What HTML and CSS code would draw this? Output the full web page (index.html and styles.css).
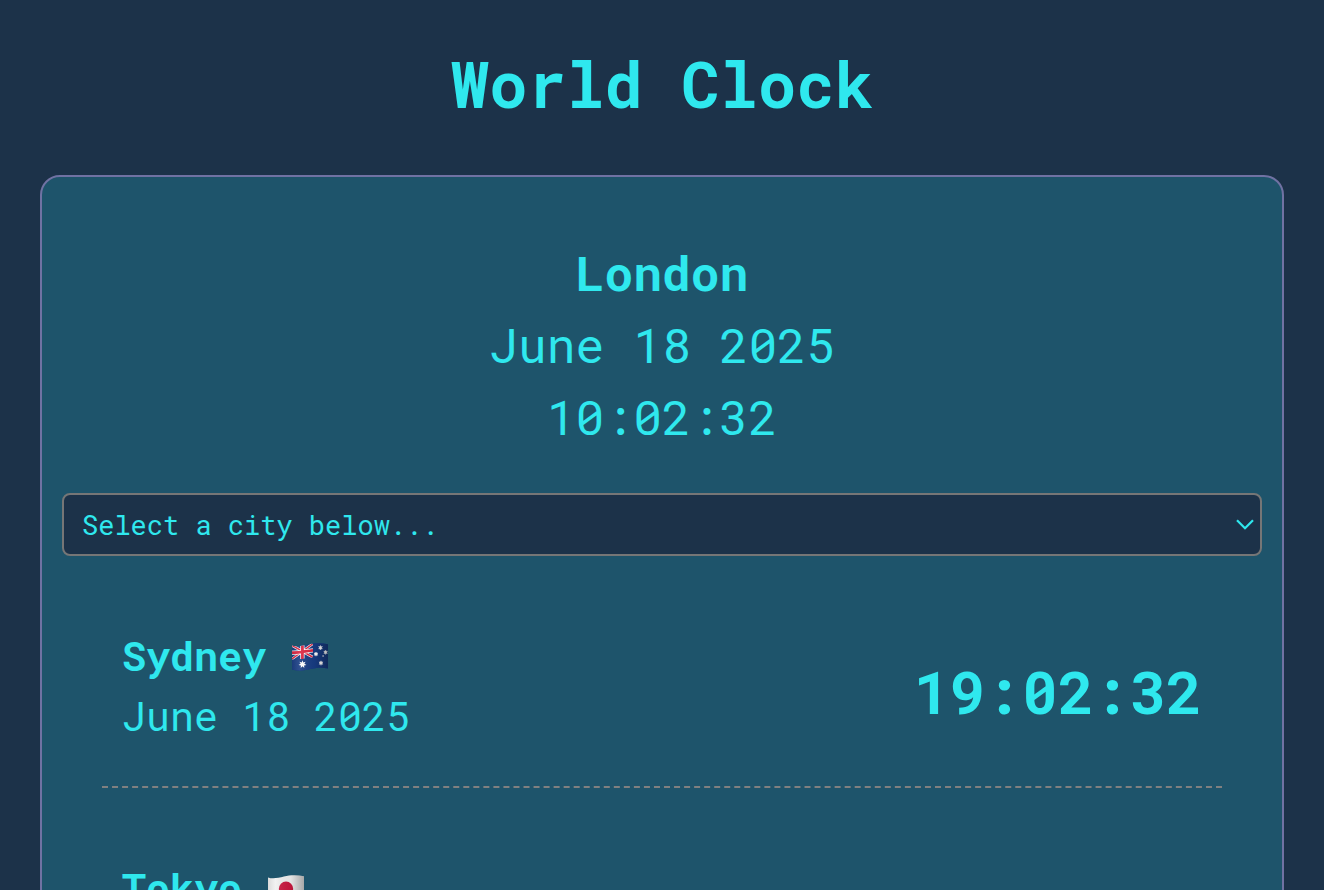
FILE: index.html
```html
<!DOCTYPE html>
<html lang="en">
<head>
<meta charset="utf-8">
<meta name="viewport" content="width=device-width, initial-scale=1">
<title>World Clock</title>
<link rel="stylesheet" href="styles.css">
</head>
<body>
<h1 class="title">World Clock</h1>
<main class="card">
  <section class="current">
    <h2 class="current-city">London</h2>
    <p class="current-line">June 18 2025</p>
    <p class="current-line">10:02:32</p>
  </section>
  <div class="picker">
    <select class="picker-select" aria-label="Select a city">
      <option>Select a city below...</option>
      <option>London</option>
      <option>Sydney</option>
      <option>Tokyo</option>
    </select>
    <svg class="picker-arrow" viewBox="0 0 18 11" aria-hidden="true"><path d="M1 1.2 9 9.2 17 1.2" fill="none" stroke="currentColor" stroke-width="2.2"/></svg>
  </div>
  <section class="cities">
    <article class="city">
      <div>
        <h3 class="city-name">Sydney
          <svg class="flag" viewBox="0 0 38 28" role="img" aria-label="Australia">
            <defs>
              <clipPath id="wave"><path d="M2 2.4C6 4 12 3.2 18 1.6S31 0 38 1.2V25.6C32 24 26 24.6 19 26.3S7 28 2 26.6Z"/></clipPath>
              <linearGradient id="shade"><stop offset="0" stop-color="#000" stop-opacity=".12"/><stop offset=".25" stop-color="#fff" stop-opacity=".1"/><stop offset=".65" stop-color="#000" stop-opacity=".05"/><stop offset="1" stop-color="#000" stop-opacity=".3"/></linearGradient>
            </defs>
            <g clip-path="url(#wave)">
              <path fill="#173c83" d="M0 0h38v28H0z"/>
              <g transform="translate(1 0)">
                <path d="M1 2.5 21.5 14M21.5 1 1 16" stroke="#fff" stroke-width="2.6"/>
                <path d="M1 2.5 21.5 14M21.5 1 1 16" stroke="#dc2540" stroke-width="1.5"/>
                <path d="M11.4 2v14M1 9.6C8 10 15 8 22 7.4" fill="none" stroke="#fff" stroke-width="4.2"/>
                <path d="M11.4 2v14M1 9.6C8 10 15 8 22 7.4" fill="none" stroke="#dc2540" stroke-width="2.8"/>
                <path fill="#173c83" d="M-1 16.6C8 17 15 15 22 14.4V28H-1zM22 0h16v28H22z"/>
                <g fill="#fff">
                  <path d="m11.5 17.3.8 2.3 2.3-.9-1.2 2.1 2.1 1.2-2.4.4.2 2.5-1.8-1.6-1.8 1.6.2-2.5-2.4-.4 2.1-1.2-1.2-2.1 2.3.9z"/>
                  <path d="m29.5 2.5.6 1.2 1.3-.2-.8 1.2.7 1.2-1.3-.2-.5 1.3-.5-1.3-1.3.2.7-1.2-.8-1.2 1.3.2zM25 9l.6 1.1 1.2-.1-.7 1.1.6 1.1-1.2-.1-.5 1.1-.5-1.1-1.2.1.6-1.1-.7-1.1 1.2.1zM34.6 7.2l.6 1.1 1.2-.1-.7 1.1.6 1.1-1.2-.1-.5 1.1-.5-1.1-1.2.1.6-1.1-.7-1.1 1.2.1zM30 17.8l.6 1.2 1.3-.1-.8 1.2.6 1.2-1.2-.2-.5 1.2-.5-1.2-1.2.2.6-1.2-.8-1.2 1.3.1z" stroke="#fff" stroke-width=".5"/>
                  <circle cx="32.1" cy="13" r=".8"/>
                </g>
              </g>
              <path fill="url(#shade)" d="M0 0h38v28H0z"/>
            </g>
          </svg>
        </h3>
        <p class="city-date">June 18 2025</p>
      </div>
      <time class="city-time">19:02:32</time>
    </article>
    <article class="city">
      <div>
        <h3 class="city-name">Tokyo
          <svg class="flag" viewBox="0 0 38 28" role="img" aria-label="Japan">
            <g clip-path="url(#wave)">
              <path fill="#f0f0f0" d="M0 0h38v28H0z"/>
              <ellipse cx="20" cy="14" rx="7.2" ry="7.5" fill="#c9183f"/>
              <path fill="url(#shade)" d="M0 0h38v28H0z"/>
            </g>
          </svg>
        </h3>
        <p class="city-date">June 18 2025</p>
      </div>
      <time class="city-time">18:02:32</time>
    </article>
  </section>
</main>
</body>
</html>
```
FILE: styles.css
```css
* {
  box-sizing: border-box;
}

body {
  margin: 0;
  padding: 40px;
  background: #1c3249;
  color: #2fe8ee;
  font-family: "Roboto Mono", "DejaVu Sans Mono", monospace;
  font-weight: 440;
}

h1, h2, h3, p {
  margin: 0;
}

.title {
  margin-bottom: 48px;
  font-size: 64px;
  line-height: 87px;
  text-align: center;
}

.card {
  padding: 20px;
  border: 2px solid #7072a3;
  border-radius: 20px;
  background: #1e546b;
}

.current {
  padding: 40px 0;
  font-size: 48px;
  line-height: 72px;
  text-align: center;
}

.current-city {
  font-size: 48px;
}

.picker {
  display: grid;
  align-items: center;
}

.picker-select,
.picker-arrow {
  grid-area: 1 / 1;
}

.picker-select {
  appearance: none;
  width: 100%;
  padding: 12px 18px;
  border: 2px solid #767676;
  border-radius: 8px;
  background: #1c3249;
  color: inherit;
  font-family: inherit;
  font-size: 27px;
  font-weight: inherit;
  line-height: 35px;
}

.picker-arrow {
  justify-self: end;
  width: 18px;
  height: 11px;
  margin-right: 8px;
  pointer-events: none;
}

.cities {
  display: grid;
  gap: 30px;
  padding: 30px 40px;
}

.city {
  display: flex;
  align-items: center;
  justify-content: space-between;
  padding: 40px 20px;
  border-bottom: 2px dashed #808080;
}

.city-name,
.city-date {
  font-size: 40px;
  line-height: 60px;
}

.flag {
  width: 38px;
  height: 28px;
}

.city-time {
  padding-top: 10px;
  font-size: 60px;
  font-weight: bold;
  line-height: 90px;
}
```
